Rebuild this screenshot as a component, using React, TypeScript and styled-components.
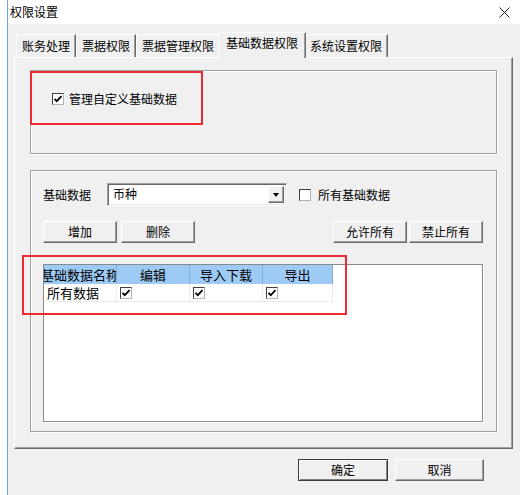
import React from "react";
import styled, { createGlobalStyle, css } from "styled-components";

const GlobalStyle = createGlobalStyle`
  html, body { margin: 0; padding: 0; background: #ffffff; }
  body {
    font-family: "Noto Sans CJK SC", "Noto Sans", "Liberation Sans", sans-serif;
    color: #000;
  }
  * { box-sizing: border-box; }
`;

const Screen = styled.div`
  width: 520px;
  height: 495px;
  display: flex;
  background: #ffffff;
  overflow: hidden;
`;

const Window = styled.div`
  margin-left: 7px;
  border-left: 1px solid #6aa9e6;
  flex: 1;
  display: flex;
  flex-direction: column;
`;

const TitleBar = styled.div`
  height: 24px;
  background: #ffffff;
  display: flex;
  align-items: center;
  justify-content: space-between;
  padding: 0 10px 0 2px;
  font-size: 12px;
  line-height: 16px;
`;

const CloseIcon = styled.svg`
  width: 11px;
  height: 11px;
  display: block;
`;

const Body = styled.div`
  flex: 1;
  background: #f0f0f0;
  padding: 8px 0 0 6px;
  display: flex;
  flex-direction: column;
`;

const TabStrip = styled.div`
  height: 25px;
  display: flex;
  align-items: flex-end;
  padding-left: 2px;
  position: relative;
  z-index: 1;
`;

const Tab = styled.div<{ $active?: boolean }>`
  height: 23px;
  padding: 2px 5px 0;
  font-size: 12px;
  line-height: 18px;
  white-space: nowrap;
  background: #f0f0f0;
  border-top: 1px solid #ffffff;
  border-left: 1px solid #ffffff;
  border-right: 1px solid #696969;
  box-shadow: inset -1px 0 0 #a0a0a0;
  ${(p) =>
    p.$active &&
    css`
      height: 26px;
      margin: 0 -2px -1px;
      padding: 1px 7px 0;
      position: relative;
      z-index: 2;
    `}
`;

const Panel = styled.div`
  width: 499px;
  height: 392px;
  border-top: 1px solid #ffffff;
  border-left: 1px solid #ffffff;
  border-right: 1px solid #696969;
  border-bottom: 1px solid #696969;
  box-shadow: inset -1px -1px 0 #a0a0a0;
  padding: 12px 15px 0;
  display: flex;
  flex-direction: column;
  gap: 16px;
`;

const GroupBox = styled.div<{ $h: number; $pad: string }>`
  position: relative;
  height: ${(p) => p.$h}px;
  border: 1px solid #a0a0a0;
  box-shadow: inset 1px 1px 0 #ffffff, 1px 1px 0 #ffffff;
  padding: ${(p) => p.$pad};
  display: flex;
  flex-direction: column;
`;

const RedFrame = styled.div<{ $l: number; $t: number; $w: number; $h: number }>`
  position: absolute;
  left: ${(p) => p.$l}px;
  top: ${(p) => p.$t}px;
  width: ${(p) => p.$w}px;
  height: ${(p) => p.$h}px;
  border: 2px solid #ee2b2e;
  pointer-events: none;
  z-index: 5;
`;

const CheckRow = styled.label`
  display: flex;
  align-items: center;
  gap: 5px;
  font-size: 12px;
  line-height: 16px;
  white-space: nowrap;
`;

const Box = styled.span<{ $gap?: number }>`
  width: 12px;
  height: 12px;
  flex: none;
  background: #ffffff;
  border-style: solid;
  border-width: 1px;
  border-color: #404040 #b4b4b4 #b4b4b4 #404040;
  display: inline-flex;
  align-items: center;
  justify-content: center;
  margin-left: ${(p) => p.$gap ?? 0}px;
`;

const CheckMark = () => (
  <svg width="10" height="10" viewBox="0 0 10 10" style={{ display: "block" }}>
    <polyline points="1.5,4.8 3.8,7.2 8.5,2.2" fill="none" stroke="#000" strokeWidth="1.8" />
  </svg>
);

const CheckBox = ({ checked, gap }: { checked?: boolean; gap?: number }) => (
  <Box $gap={gap}>{checked && <CheckMark />}</Box>
);

const FieldRow = styled.div`
  display: flex;
  align-items: center;
  height: 23px;
`;

const FieldLabel = styled.span`
  font-size: 12px;
  line-height: 16px;
  width: 64px;
  white-space: nowrap;
`;

const Combo = styled.div`
  width: 180px;
  height: 23px;
  background: #ffffff;
  border-top: 1px solid #a0a0a0;
  border-left: 1px solid #a0a0a0;
  border-right: 1px solid #ffffff;
  border-bottom: 1px solid #ffffff;
  box-shadow: inset 1px 1px 0 #696969, inset -1px -1px 0 #e3e3e3;
  display: flex;
  align-items: stretch;
  padding: 2px 2px 2px 5px;
`;

const ComboText = styled.span`
  flex: 1;
  font-size: 12px;
  line-height: 16px;
`;

const DropButton = styled.span`
  width: 16px;
  background: #f0f0f0;
  border-top: 1px solid #ffffff;
  border-left: 1px solid #ffffff;
  border-right: 1px solid #696969;
  border-bottom: 1px solid #696969;
  box-shadow: inset -1px -1px 0 #a0a0a0;
  display: flex;
  align-items: center;
  justify-content: center;
`;

const Arrow = styled.span`
  width: 0;
  height: 0;
  border-left: 3.5px solid transparent;
  border-right: 3.5px solid transparent;
  border-top: 4px solid #000;
`;

const ButtonRow = styled.div<{ $mt: number }>`
  display: flex;
  justify-content: space-between;
  margin-top: ${(p) => p.$mt}px;
`;

const ButtonGroup = styled.div<{ $gap: number }>`
  display: flex;
  gap: ${(p) => p.$gap}px;
`;

const Button = styled.button<{ $w: number; $default?: boolean }>`
  width: ${(p) => p.$w}px;
  height: 22px;
  padding: 0;
  font-family: inherit;
  font-size: 12px;
  line-height: 16px;
  color: #000;
  background: #f0f0f0;
  border-top: 1px solid #ffffff;
  border-left: 1px solid #ffffff;
  border-right: 1px solid #696969;
  border-bottom: 1px solid #696969;
  box-shadow: inset -1px -1px 0 #a0a0a0;
  ${(p) =>
    p.$default &&
    css`
      border: 1px solid #3c3c3c;
      box-shadow: inset 1px 1px 0 #ffffff, inset -1px -1px 0 #808080;
    `}
`;

const ListBox = styled.div`
  margin-top: 21px;
  height: 158px;
  background: #ffffff;
  border: 1px solid #8a8a8a;
  box-shadow: 1px 1px 0 #ffffff;
`;

const Grid = styled.div`
  display: grid;
  grid-template-columns: 73px 73px 73px 70px;
  grid-template-rows: 19px 18px;
`;

const HeadCell = styled.div`
  background: #9dcbf6;
  border-right: 1px solid #86acd2;
  display: flex;
  justify-content: center;
  align-items: center;
  overflow: hidden;
  white-space: nowrap;
  font-size: 13px;
  line-height: 17px;
`;

const DataCell = styled.div`
  border-right: 1px solid #ececec;
  border-bottom: 1px solid #ececec;
  display: flex;
  align-items: center;
  padding-left: 3px;
  font-size: 13px;
  line-height: 17px;
  white-space: nowrap;
  overflow: hidden;
`;

const Footer = styled.div`
  display: flex;
  justify-content: flex-end;
  gap: 7px;
  padding: 10px 36px 0 0;
`;

export default function App() {
  const tabs = ["账务处理", "票据权限", "票据管理权限", "基础数据权限", "系统设置权限"];
  const cols = ["基础数据名称", "编辑", "导入下载", "导出"];
  return (
    <>
      <GlobalStyle />
      <Screen>
        <Window>
          <TitleBar>
            <span>权限设置</span>
            <CloseIcon viewBox="0 0 11 11">
              <path d="M0.5 0.5 L10.5 10.5 M10.5 0.5 L0.5 10.5" stroke="#222" strokeWidth="1" fill="none" />
            </CloseIcon>
          </TitleBar>
          <Body>
            <TabStrip>
              {tabs.map((t, i) => (
                <Tab key={t} $active={i === 3}>
                  {t}
                </Tab>
              ))}
            </TabStrip>
            <Panel>
              <GroupBox $h={84} $pad="20px 0 0 21px">
                <CheckRow>
                  <CheckBox checked />
                  管理自定义基础数据
                </CheckRow>
                <RedFrame $l={-1} $t={0} $w={173} $h={54} />
              </GroupBox>
              <GroupBox $h={262} $pad="12px 13px 0 12px">
                <FieldRow>
                  <FieldLabel>基础数据</FieldLabel>
                  <Combo>
                    <ComboText>币种</ComboText>
                    <DropButton>
                      <Arrow />
                    </DropButton>
                  </Combo>
                  <CheckRow>
                    <CheckBox gap={12} />
                    <span style={{ marginLeft: 2 }}>所有基础数据</span>
                  </CheckRow>
                </FieldRow>
                <ButtonRow $mt={15}>
                  <ButtonGroup $gap={4}>
                    <Button $w={74}>增加</Button>
                    <Button $w={74}>删除</Button>
                  </ButtonGroup>
                  <ButtonGroup $gap={2}>
                    <Button $w={74}>允许所有</Button>
                    <Button $w={74}>禁止所有</Button>
                  </ButtonGroup>
                </ButtonRow>
                <ListBox>
                  <Grid>
                    {cols.map((c) => (
                      <HeadCell key={c}>{c}</HeadCell>
                    ))}
                    <DataCell>所有数据</DataCell>
                    <DataCell>
                      <CheckBox checked />
                    </DataCell>
                    <DataCell>
                      <CheckBox checked />
                    </DataCell>
                    <DataCell>
                      <CheckBox checked />
                    </DataCell>
                  </Grid>
                </ListBox>
                <RedFrame $l={-9} $t={84} $w={325} $h={60} />
              </GroupBox>
            </Panel>
            <Footer>
              <Button $w={90} $default>
                确定
              </Button>
              <Button $w={89}>取消</Button>
            </Footer>
          </Body>
        </Window>
      </Screen>
    </>
  );
}
